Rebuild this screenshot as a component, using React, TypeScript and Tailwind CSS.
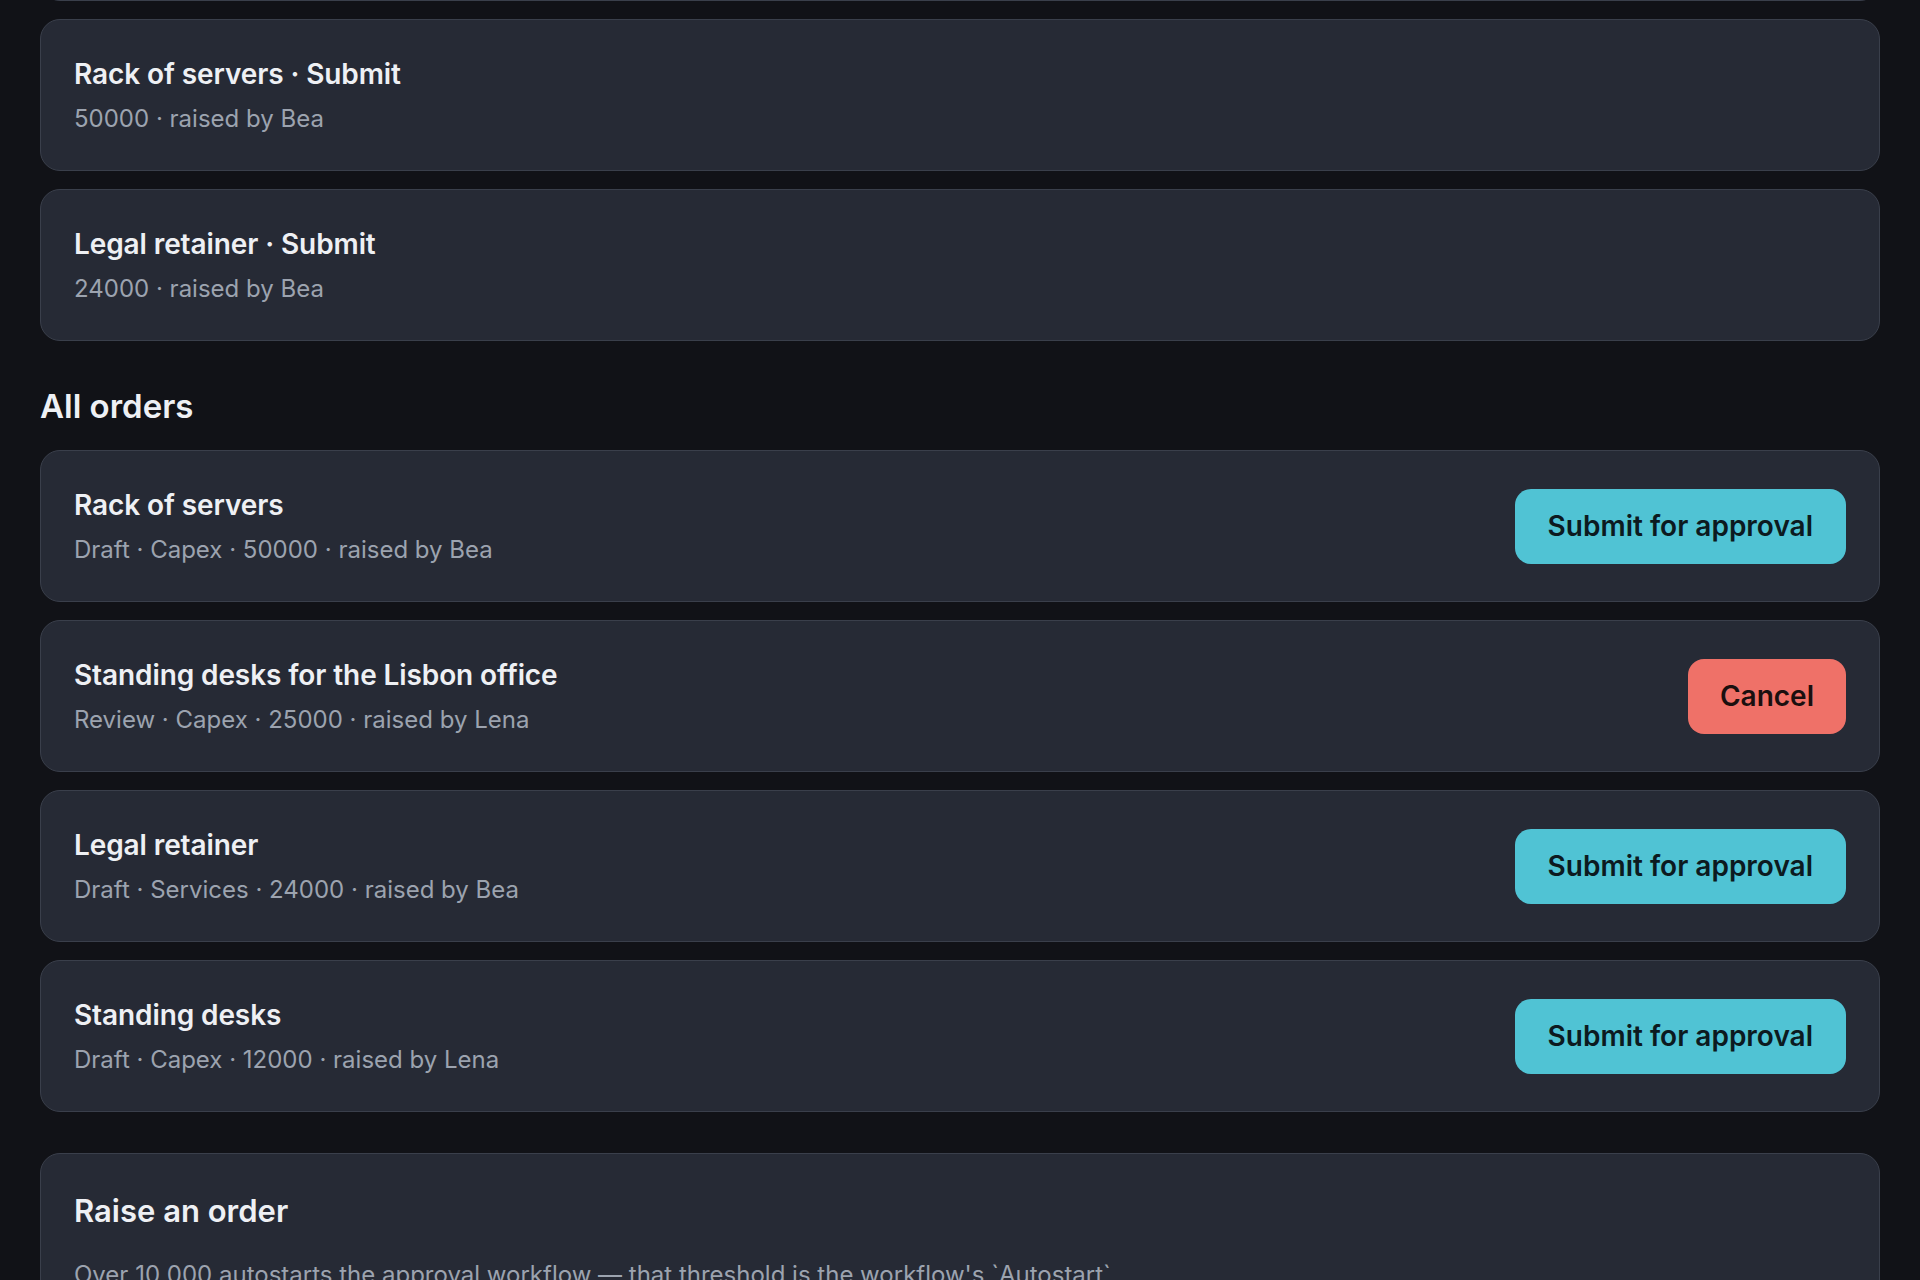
import React from "react";

type Order = {
  title: string;
  meta: string;
  action?: "submit" | "cancel";
};

const pending: Order[] = [
  { title: "Rack of servers · Submit", meta: "50000 · raised by Bea" },
  { title: "Legal retainer · Submit", meta: "24000 · raised by Bea" },
];

const orders: Order[] = [
  { title: "Rack of servers", meta: "Draft · Capex · 50000 · raised by Bea", action: "submit" },
  { title: "Standing desks for the Lisbon office", meta: "Review · Capex · 25000 · raised by Lena", action: "cancel" },
  { title: "Legal retainer", meta: "Draft · Services · 24000 · raised by Bea", action: "submit" },
  { title: "Standing desks", meta: "Draft · Capex · 12000 · raised by Lena", action: "submit" },
];

const card = "rounded-[20px] border border-[#3a3f4b] bg-[#262a35]";

function OrderCard({ order }: { order: Order }) {
  return (
    <div className={`flex items-center justify-between px-[33px] py-[36px] ${card}`}>
      <div className="flex flex-col">
        <div className="text-[28px] font-semibold leading-[36px] tracking-[-0.1px] text-[#eef0f4]">{order.title}</div>
        <div className="mt-[12px] text-[24px] leading-[30px] text-[#9ca3af]">{order.meta}</div>
      </div>
      {order.action === "submit" && (
        <button className="flex h-[75px] items-center rounded-[16px] bg-[#50c3d4] px-[33px] text-[28px] font-semibold text-[#0c1a20]">
          Submit for approval
        </button>
      )}
      {order.action === "cancel" && (
        <button className="flex h-[75px] items-center rounded-[16px] bg-[#ef7168] px-[32px] text-[28px] font-semibold text-[#1a0f0f]">
          Cancel
        </button>
      )}
    </div>
  );
}

export default function App() {
  return (
    <div className="h-[1280px] overflow-hidden bg-[#111217] font-['Inter',sans-serif]">
      <div className="-mt-[151px] px-[40px]">
        {/* ── Waiting on you (list scrolled past its first entry) ── */}
        <div className="flex flex-col gap-[18px]">
          <div className={`h-[152px] ${card}`} />
          {pending.map((o) => (
            <OrderCard key={o.title} order={o} />
          ))}
        </div>

        {/* ── All orders ── */}
        <h2 className="mb-[24px] mt-[45px] text-[33px] font-semibold leading-[40px] text-[#eef0f4]">All orders</h2>
        <div className="flex flex-col gap-[18px]">
          {orders.map((o) => (
            <OrderCard key={o.title} order={o} />
          ))}
        </div>

        {/* ── Raise form ── */}
        <div className={`mt-[41px] px-[33px] py-[38px] ${card}`}>
          <h3 className="text-[31px] font-semibold leading-[38px] text-[#eef0f4]">Raise an order</h3>
          <p className="mt-[27px] text-[24px] leading-[36px] text-[#9ca3af]">
            Over 10 000 autostarts the approval workflow — that threshold is the workflow's `Autostart`
          </p>
          <div className="mt-[24px] flex flex-col gap-[16px]">
            <input
              placeholder="Title"
              className="h-[56px] rounded-[14px] border border-[#3a3f4b] bg-[#1b1e26] px-[18px] text-[24px] text-[#eef0f4]"
            />
            <input
              placeholder="Amount"
              className="h-[56px] rounded-[14px] border border-[#3a3f4b] bg-[#1b1e26] px-[18px] text-[24px] text-[#eef0f4]"
            />
          </div>
        </div>
      </div>
    </div>
  );
}
